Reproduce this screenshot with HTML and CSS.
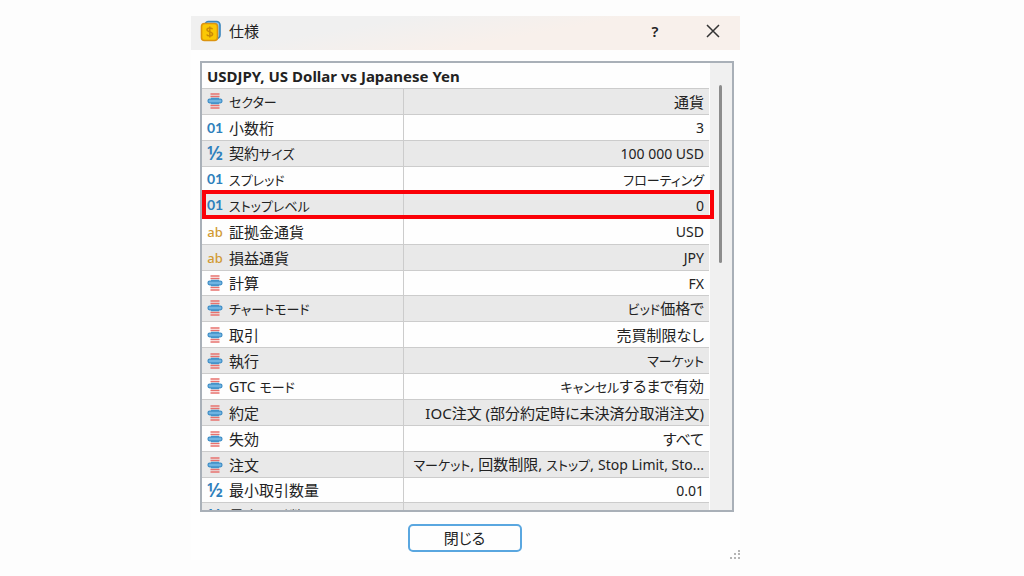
FILE: index.html
```html
<!DOCTYPE html>
<html lang="ja">
<head>
  <meta charset="UTF-8">
  <meta name="viewport" content="width=device-width, initial-scale=1.0">
  <title>仕様</title>
  <link rel="stylesheet" href="styles.css">
</head>
<body>
  <svg class="symbols" aria-hidden="true">
    <symbol id="enum" viewBox="0 0 16 16">
      <path d="M3.500 1h9M3.500 3.500h9M3.500 12.500h9M3.500 15h9" stroke="#e8716d" stroke-width="1.500"/>
      <path d="M4 5.500h8M4 10.500h8" stroke="#4b9ad0" stroke-width="1.300"/>
      <rect x="1" y="6.200" width="14" height="3.600" rx="1.800" fill="#70b4e2" stroke="#3d8dc6" stroke-width="1.200"/>
    </symbol>
    <symbol id="coin" viewBox="0 0 22 22">
      <rect x="5" y="1.5" width="15" height="17" rx="3.5" fill="#8cc8f2" stroke="#3985bd" stroke-width="1.6"/>
      <rect x="1.5" y="3.5" width="16" height="17" rx="3" fill="#fac805" stroke="#dc9410" stroke-width="1.6"/>
      <path d="M12.5 9.2C12 7.7 7 7.4 7 9.8c0 2.6 5.600 1.500 5.600 4.200 0 2.500-5.200 2.300-5.800.5M9.800 6.500v11" fill="none" stroke="#c98a08" stroke-width="1.500"/>
    </symbol>
  </svg>

  <div id="dialog">
    <div id="titlebar">
      <svg class="app-icon"><use href="#coin"/></svg>
      <h1>仕様</h1>
      <button class="title-btn help" aria-label="ヘルプ">?</button>
      <button class="title-btn" aria-label="ウィンドウを閉じる">
        <svg width="14" height="14" viewBox="0 0 14 14"><path d="M1 1l12 12M13 1L1 13" stroke="#333" stroke-width="1.5"/></svg>
      </button>
    </div>

    <div id="content">
      <div id="list">
        <table>
          <caption>USDJPY, US Dollar vs Japanese Yen</caption>
          <tbody>
            <tr><th scope="row"><svg class="icon"><use href="#enum"/></svg><span class="kana">セクター</span></th><td>通貨</td></tr>
            <tr><th scope="row"><span class="icon int">01</span>小数桁</th><td><span class="latin">3</span></td></tr>
            <tr><th scope="row"><span class="icon half">½</span>契約<span class="kana">サイズ</span></th><td><span class="latin">100 000 USD</span></td></tr>
            <tr><th scope="row"><span class="icon int">01</span><span class="kana">スプレッド</span></th><td><span class="kana">フローティング</span></td></tr>
            <tr class="marked"><th scope="row"><span class="icon int">01</span><span class="kana">ストップレベル</span></th><td><span class="latin">0</span></td></tr>
            <tr><th scope="row"><span class="icon str">ab</span>証拠金通貨</th><td><span class="latin">USD</span></td></tr>
            <tr><th scope="row"><span class="icon str">ab</span>損益通貨</th><td><span class="latin">JPY</span></td></tr>
            <tr><th scope="row"><svg class="icon"><use href="#enum"/></svg>計算</th><td><span class="latin">FX</span></td></tr>
            <tr><th scope="row"><svg class="icon"><use href="#enum"/></svg><span class="kana">チャートモード</span></th><td><span class="kana">ビッド</span>価格で</td></tr>
            <tr><th scope="row"><svg class="icon"><use href="#enum"/></svg>取引</th><td>売買制限なし</td></tr>
            <tr><th scope="row"><svg class="icon"><use href="#enum"/></svg>執行</th><td><span class="kana">マーケット</span></td></tr>
            <tr><th scope="row"><svg class="icon"><use href="#enum"/></svg><span class="latin">GTC</span> <span class="kana">モード</span></th><td><span class="kana">キャンセル</span>するまで有効</td></tr>
            <tr><th scope="row"><svg class="icon"><use href="#enum"/></svg>約定</th><td>IOC注文 (部分約定時に未決済分取消注文)</td></tr>
            <tr><th scope="row"><svg class="icon"><use href="#enum"/></svg>失効</th><td>すべて</td></tr>
            <tr><th scope="row"><svg class="icon"><use href="#enum"/></svg>注文</th><td><span class="kana">マーケット</span>, 回数制限, <span class="kana">ストップ</span>, <span class="latin">Stop Limit, Sto...</span></td></tr>
            <tr><th scope="row"><span class="icon half">½</span>最小取引数量</th><td><span class="latin">0.01</span></td></tr>
            <tr><th scope="row"><span class="icon half">½</span>最大取引数量</th><td></td></tr>
          </tbody>
        </table>
        <div id="scrollbar"><div class="thumb"></div></div>
      </div>
      <button id="close">閉じる</button>
    </div>
    <svg id="grip" viewBox="0 0 10 10"><path d="M8 1h2M8 4h2M8 8h2M4 4h2M4 8h2M0 8h2" stroke="#b5b5b5" stroke-width="2"/></svg>
  </div>
</body>
</html>
```
FILE: styles.css
```css
* { box-sizing: border-box; }
body { margin: 0; padding: 16px 16px 16px 191px; background: #fdfdfd; color: #222; font-family: "Noto Sans", "Noto Sans CJK JP", sans-serif; font-size: 15px; font-feature-settings: "palt"; }
button { font: inherit; font-feature-settings: inherit; color: inherit; cursor: pointer; }
.symbols { position: absolute; width: 0; height: 0; }

#dialog { position: relative; max-width: 549px; background: #fefefe; }
#titlebar { display: flex; align-items: center; height: 34px; padding: 0 8px 4px 9px; background: linear-gradient(170deg, #f0f0f0 30%, #f8f0eb 60%); }
.app-icon { width: 22px; height: 22px; margin-right: 7px; }
h1 { flex: 1; margin: 0; font-size: 15px; font-weight: 400; line-height: 22px; }
.title-btn { display: flex; align-items: center; justify-content: center; width: 38px; height: 28px; padding: 0; border: none; background: none; }
.help { margin-right: 20px; font-weight: 600; }

#content { display: flex; flex-direction: column; align-items: center; padding: 11px 6px 8px 9px; }
#list { display: flex; width: 100%; height: 451px; overflow: hidden; border: 2px solid #a9b0b8; background: #fefefe; }
#scrollbar { flex: none; width: 22px; margin-left: 1px; padding: 22px 0 0 9px; background: #f0f0f0; }
.thumb { width: 3px; height: 178px; border-radius: 2px; background: #8c8c8c; }

table { flex: 1; width: 100%; table-layout: fixed; border-collapse: separate; border-spacing: 0; }
caption { height: 25px; padding-left: 5px; font-size: 15px; font-weight: 700; line-height: 26px; text-align: left; white-space: nowrap; }
tr:nth-child(odd) { background: #e9e9e9; }
th, td { height: 26px; padding: 0 5px; border-top: 1px solid #ccc; line-height: 22px; font-weight: 400; white-space: nowrap; vertical-align: middle; }
tr:nth-child(8n) > * { height: 25px; }
th { width: 202px; border-right: 1px solid #ccc; text-align: left; }
td { text-align: right; }
.latin { font-size: 14px; }
.kana { font-size: 13px; }
.icon { display: inline-block; width: 16px; height: 22px; margin-right: 6px; text-align: center; vertical-align: top; }
.int { color: #2e80bc; font-family: Lato, sans-serif; font-size: 14px; font-weight: 700; }
.half { color: #2e80bc; font-size: 19px; font-weight: 600; }
.str { color: #d19a32; font-size: 13px; font-weight: 500; }

.marked { position: relative; }
.marked th::after { content: ""; position: absolute; inset: -2px -5px -1px 0; border: 4px solid #fb0007; }

#close { width: 114px; height: 28px; margin: 12px 5px 0 0; padding: 0; border: 2px solid #5aa7e0; border-radius: 5px; background: #fefefe; line-height: 22px; }
#grip { position: absolute; right: 0; bottom: 0; width: 10px; height: 10px; }
```
